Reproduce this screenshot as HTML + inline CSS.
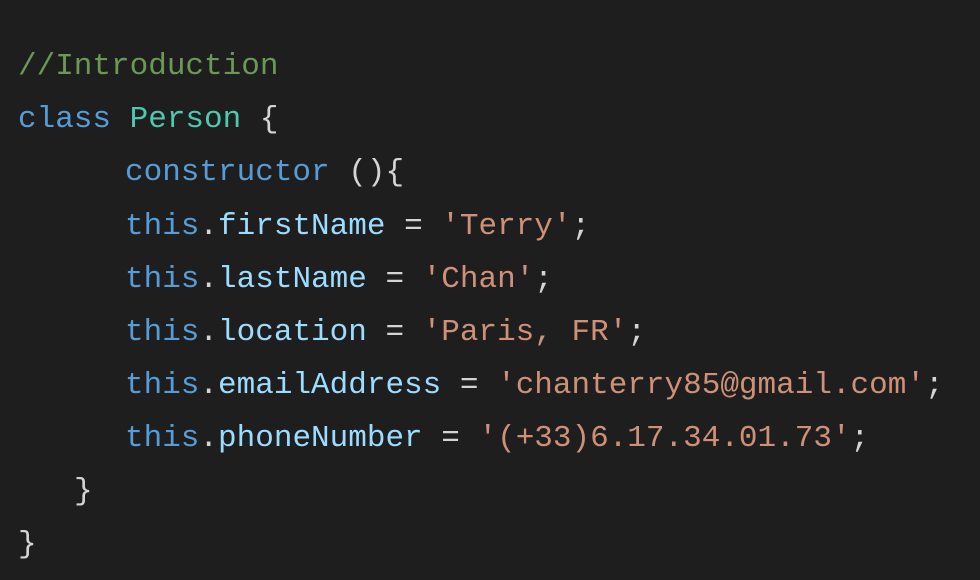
<!DOCTYPE html>
<html><head><style>
html,body{margin:0;padding:0;background:#1e1e1e;width:980px;height:580px;overflow:hidden}
.l{position:absolute;font-family:"Liberation Mono",monospace;font-size:31px;line-height:53px;white-space:pre;color:#d4d4d4}
.c{color:#6a9955}.k{color:#569cd6}.t{color:#4ec9b0}.p{color:#9cdcfe}.s{color:#ce9178}
</style></head><body>
<div class="l" style="left:18px;top:40px"><span class="c">//Introduction</span></div>
<div class="l" style="left:18px;top:93px"><span class="k">class</span> <span class="t">Person</span> {</div>
<div class="l" style="left:125px;top:146px"><span class="k">constructor</span> (){</div>
<div class="l" style="left:125px;top:200px"><span class="k">this</span>.<span class="p">firstName</span> = <span class="s">'Terry'</span>;</div>
<div class="l" style="left:125px;top:253px"><span class="k">this</span>.<span class="p">lastName</span> = <span class="s">'Chan'</span>;</div>
<div class="l" style="left:125px;top:306px"><span class="k">this</span>.<span class="p">location</span> = <span class="s">'Paris, FR'</span>;</div>
<div class="l" style="left:125px;top:359px"><span class="k">this</span>.<span class="p">emailAddress</span> = <span class="s">'chanterry85@gmail.com'</span>;</div>
<div class="l" style="left:125px;top:412px"><span class="k">this</span>.<span class="p">phoneNumber</span> = <span class="s">'(+33)6.17.34.01.73'</span>;</div>
<div class="l" style="left:74px;top:465px">}</div>
<div class="l" style="left:18px;top:518px">}</div>
</body></html>
